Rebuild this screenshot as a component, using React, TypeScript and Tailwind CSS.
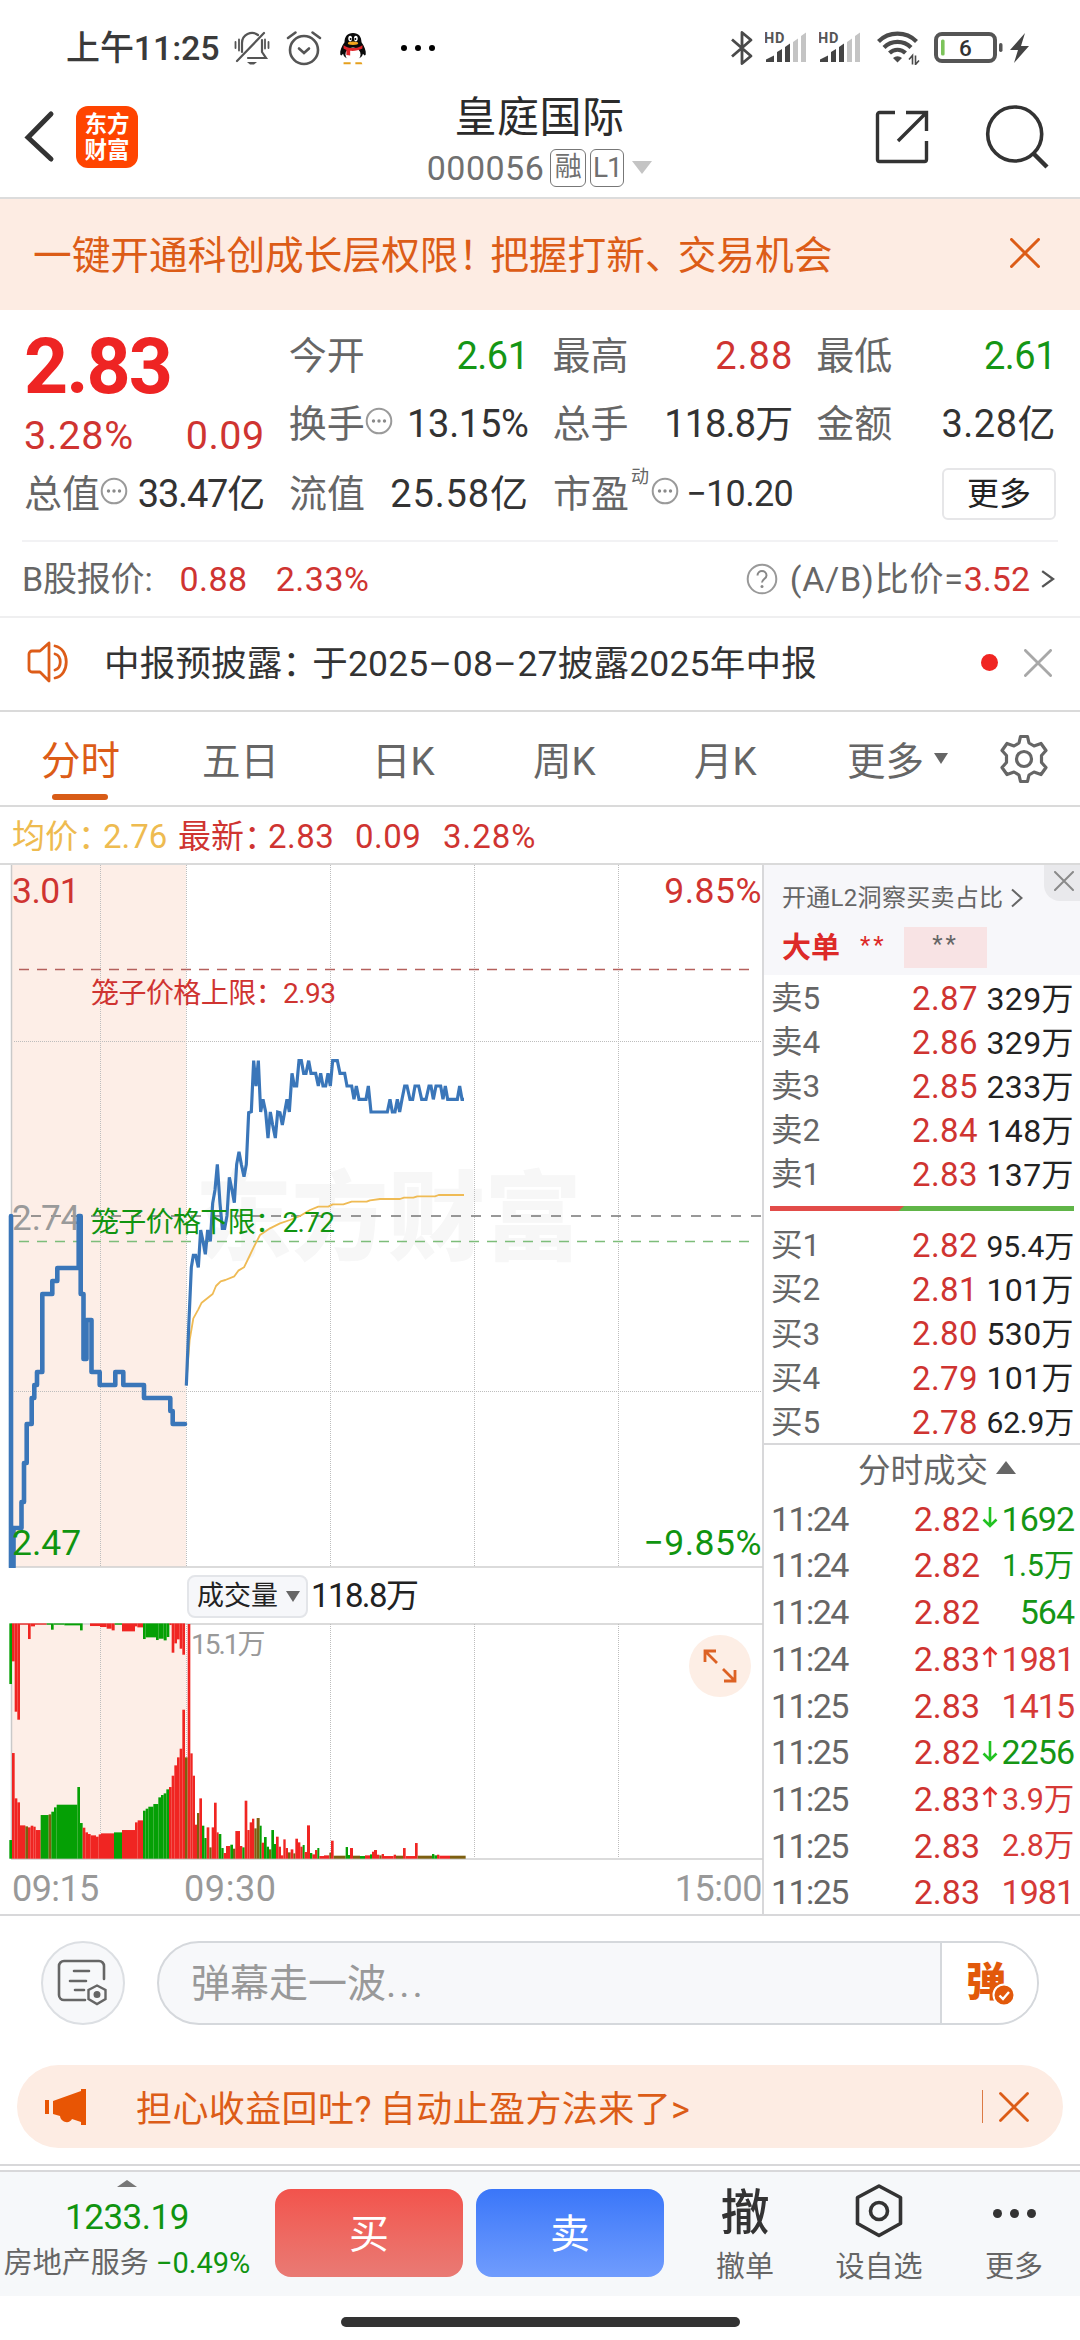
import React from "react";

const RED = "#f02522";
const GREEN = "#05a005";
const OLIVE = "#7d5f10";

/* ---------- icons ---------- */

function Close({ className, width = 3 }: { className: string; width?: number }) {
  return (
    <svg viewBox="0 0 30 30" className={className} fill="none" stroke="currentColor" strokeWidth={width}>
      <path d="M1.5 1.5 28.5 28.5M28.5 1.5 1.5 28.5" strokeLinecap="round" />
    </svg>
  );
}

function Dots() {
  return (
    <svg viewBox="0 0 28 28" className="-mt-1.5 size-7 shrink-0">
      <circle cx="14" cy="14" r="12.3" fill="none" stroke="#9a9a9a" strokeWidth="2" />
      <g fill="#8a8a8a">
        <circle cx="8.500" cy="14" r="1.7" />
        <circle cx="14" cy="14" r="1.7" />
        <circle cx="19.500" cy="14" r="1.7" />
      </g>
    </svg>
  );
}

function Signal() {
  return (
    <svg viewBox="0 0 42 34" className="h-[34px] w-[42px]">
      <text x="-1" y="11.5" fontSize="14.5" fontWeight="700" fontFamily="Roboto" fill="#555" letterSpacing="0.8">HD</text>
      <path d="M1 31v-2.5L9 24.5V31Z M12 31V21l5-3v13Z M20 31V16l5-3.500V31Z" fill="#444" />
      <path d="M28 31V11l5-3.500V31Z M36 31V5l5-3.500V31Z" fill="#c4c4c4" />
    </svg>
  );
}

function StatusBar() {
  return (
    <div className="flex h-24 items-center justify-between pl-[66px] pr-[50px] text-[#3a3a3a]">
      <div className="flex items-center">
        <span className="w-[156px] whitespace-nowrap text-[34px] font-medium tracking-[-0.100px]">上午11:25</span>
        <svg viewBox="0 0 36 36" className="ml-3 h-9 w-9" fill="none" stroke="#555" strokeWidth="2.200" strokeLinecap="round">
          <path d="M8 22V13a10 10 0 0 1 16-8M28 10v12l4 6H14" />
          <path d="M30 3 3 31" />
          <path d="M1.500 12v6M5 9.500v11M34.500 12v6M31 9.500v9" strokeWidth="1.800" />
          <path d="M13 32h10l-3 2.500h-4Z" fill="#555" stroke="none" />
        </svg>
        <svg viewBox="0 0 36 36" className="ml-4 h-9 w-9" fill="none" stroke="#555" strokeWidth="2.600" strokeLinecap="round">
          <circle cx="18" cy="20" r="14" />
          <path d="M2 8 9.500 2.500M34 8 26.500 2.500M13 18.500l5 4.500 5-4.500" />
        </svg>
        <svg viewBox="0 0 32 36" className="ml-[15px] h-[34px] w-8">
          <path d="M16 2c-6 0-9 4-9 10-3 4-5 9-4.500 13 1 2 2 0 3-1 1 8 20 8 21 0 1 1 2 3 3 1C30 21 28 16 25 12c0-6-3-10-9-10Z" fill="#0a0a0a" />
          <ellipse cx="16" cy="25" rx="8" ry="7.500" fill="#fff" />
          <ellipse cx="13" cy="8" rx="2" ry="3" fill="#fff" />
          <ellipse cx="19" cy="8" rx="2" ry="3" fill="#fff" />
          <circle cx="13.500" cy="8.500" r="1" fill="#000" />
          <circle cx="18.500" cy="8.500" r="1" fill="#000" />
          <ellipse cx="16" cy="13" rx="5.500" ry="1.800" fill="#f2a51c" />
          <path d="M6 15c6 4 14 4 20 0v3.500c-4 2-9 3-13 2.500v5l-4-.5v-5.500l-3-1.500Z" fill="#e0262b" />
          <path d="M6 33h7.500v2.200H6Zm12.500 0H25l1 2.200h-7.500Z" fill="#e5a01d" />
        </svg>
        <div className="ml-[32px] flex gap-2">
          <i className="size-1.5 rounded-full bg-black" />
          <i className="size-1.5 rounded-full bg-black" />
          <i className="size-1.5 rounded-full bg-black" />
        </div>
      </div>
      <div className="flex items-center">
        <svg viewBox="0 0 22 36" className="h-9 w-[22px]" fill="none" stroke="#4a4a4a" strokeWidth="2.800">
          <path d="M1 9.500 20 26 11 33.500V2.500L20 10 1 26.500" strokeLinejoin="round" />
        </svg>
        <div className="ml-3"><Signal /></div>
        <div className="ml-3"><Signal /></div>
        <svg viewBox="0 0 44 34" className="ml-4 h-[34px] w-11" fill="none" stroke="#4a4a4a" strokeWidth="4.200">
          <path d="M1.500 10.500a27 27 0 0 1 38 0M7 16.500a19 19 0 0 1 27 0M12.500 22a11.500 11.500 0 0 1 16 0" />
          <path d="M16 27a7 7 0 0 1 9 0l-4.500 4.500Z" fill="#4a4a4a" stroke="none" />
          <path d="M35.500 33.500v-9l-3.500 4M38.500 24.500v9l3.500-4" strokeWidth="1.600" />
        </svg>
        <svg viewBox="0 0 96 32" className="ml-[13px] h-8 w-24">
          <rect x="2" y="2" width="59" height="27" rx="6" fill="none" stroke="#555" strokeWidth="4" />
          <rect x="7" y="7.500" width="3.600" height="16" rx="1.500" fill="#7cc35a" />
          <text x="31.500" y="23.500" fontSize="22.500" textAnchor="middle" fill="#333" fontFamily="Roboto" fontWeight="500">6</text>
          <rect x="65" y="11" width="3.500" height="9" rx="1.700" fill="#555" />
          <path d="M91 1 76 18h8l-4 13 15-17h-8Z" fill="#444" />
        </svg>
      </div>
    </div>
  );
}

function Header() {
  return (
    <div className="flex h-[103px] items-center border-b-2 border-[#dcdcdc] pl-6">
      <svg viewBox="0 0 32 54" className="-mt-5 h-[54px] w-8 shrink-0" fill="none" stroke="#333" strokeWidth="5" strokeLinecap="round">
        <path d="M27 4 4 27.500 27 49" />
      </svg>
      <div className="-mt-5 ml-5 flex h-[62px] w-[62px] shrink-0 flex-col items-center justify-center rounded-xl bg-[#ff4400] text-[22.500px] font-bold leading-[26px] text-white">
        <span>东方</span>
        <span>财富</span>
      </div>
      <div className="flex w-[736px] shrink-0 flex-col items-center pl-[67px]">
        <div className="-mt-[15px] text-[42px] leading-[58px] tracking-[0.500px] text-[#2b2b2b]">皇庭国际</div>
        <div className="-mt-[1px] flex items-center text-[#707070]">
          <span className="text-[34px] leading-[44px] tracking-[0.500px]">000056</span>
          <span className="ml-1.5 flex h-[38px] w-9 items-center justify-center rounded-md border-[1.500px] border-[#777] text-[27px] leading-none">融</span>
          <span className="ml-1 flex h-[38px] w-[34px] items-center justify-center rounded-md border-[1.500px] border-[#777] text-[28px] leading-none tracking-[-1px]">L1</span>
          <span className="ml-2 h-0 w-0 border-x-[10px] border-t-[13px] border-x-transparent border-t-[#c4c4c4]" />
        </div>
      </div>
      <svg viewBox="0 0 56 56" className="-mt-5 h-14 w-14 shrink-0" fill="none" stroke="#333" strokeWidth="3.400">
        <path d="M21 3.500H5.500a2 2 0 0 0-2 2v45a2 2 0 0 0 2 2h45a2 2 0 0 0 2-2V32" />
        <path d="M32 3.500h20.500V22M52 4 24 32" />
      </svg>
      <svg viewBox="0 0 66 66" className="-mt-5 ml-[55px] h-[66px] w-[66px] shrink-0" fill="none" stroke="#333" strokeWidth="3.600">
        <circle cx="29.700" cy="30" r="27" />
        <path d="M48 49 62 63" strokeWidth="4.500" />
      </svg>
    </div>
  );
}

function Banner() {
  return (
    <div className="flex h-[111px] items-center justify-between bg-[#fdece3] pl-[33px] pr-10 text-[#dc5c17]">
      <div className="pt-1 text-[38.700px]">
        一键开通科创成长层权限<span className="mr-[-7px]">！</span>把握打新<span className="mr-[-6px]">、</span>交易机会
      </div>
      <Close className="-mt-1 size-[30px]" width={3} />
    </div>
  );
}

/* ---------- quote ---------- */

function Stat({ label, value, tone, info }: { label: string; value: string; tone: string; info?: boolean }) {
  return (
    <div className="flex h-[68px] items-center justify-between whitespace-nowrap">
      <div className="flex items-center text-[#666]">
        <span>{label}</span>
        {info && <Dots />}
      </div>
      <span className={tone}>{value}</span>
    </div>
  );
}

function Quote() {
  return (
    <div className="flex h-[230px] flex-col px-6 pt-3 text-[38px]">
      <div className="flex h-[138px]">
        <div className="w-[240px] text-[#cf3431]">
          <div className="h-[82px] text-[77px] font-bold leading-[91px] tracking-[-2px] text-[#ee2423]">2.83</div>
          <div className="mt-1 flex justify-between text-[39.500px] leading-[56px]">
            <span className="tracking-[0.800px]">3.28%</span>
            <span className="mr-[-1px] tracking-[0.500px]">0.09</span>
          </div>
        </div>
        <div className="ml-[25px] w-[240px]">
          <Stat label="今开" value="2.61" tone="text-[#159615] tracking-[-0.500px]" />
          <Stat label="换手" value="13.15%" tone="text-[#333] tracking-[-0.300px]" info />
        </div>
        <div className="ml-6 w-[240px]">
          <Stat label="最高" value="2.88" tone="text-[#cf3431] mr-[-1px] tracking-[1px]" />
          <Stat label="总手" value="118.8万" tone="text-[#333] tracking-[-0.900px]" />
        </div>
        <div className="ml-6 w-[240px]">
          <Stat label="最低" value="2.61" tone="text-[#159615] tracking-[-0.500px]" />
          <Stat label="金额" value="3.28亿" tone="text-[#333] tracking-[0.500px]" />
        </div>
      </div>
      <div className="flex h-[68px]">
        <div className="w-[240px]"><Stat label="总值" value="33.47亿" tone="text-[#333] tracking-[-1.200px]" info /></div>
        <div className="ml-[25px] w-[240px]"><Stat label="流值" value="25.58亿" tone="text-[#333] tracking-[0.900px]" /></div>
        <div className="ml-6 flex w-[240px] items-center text-[#666]">
          <span>市盈</span>
          <sup className="-mt-4 ml-0.5 text-lg leading-none">动</sup>
          <span className="ml-0.5 flex"><Dots /></span>
          <span className="ml-auto whitespace-nowrap text-[36px] tracking-[-0.700px] text-[#333]">−10.20</span>
        </div>
        <div className="ml-auto mt-2 flex h-[52px] w-[114px] items-center justify-center rounded-md border-2 border-[#e6e6e8] text-[32px] text-[#222]">更多</div>
      </div>
    </div>
  );
}

function BShare() {
  return (
    <div className="mx-[22px] flex h-[76px] items-center border-t-2 border-[#f2f2f4] text-[34px] text-[#666]">
      <span className="tracking-[-0.200px]">B股报价:</span>
      <span className="ml-[27px] tracking-[0.500px] text-[#cf3431]">0.88</span>
      <span className="ml-[28px] tracking-[0.500px] text-[#cf3431]">2.33%</span>
      <svg viewBox="0 0 32 32" className="ml-auto size-8">
        <circle cx="16" cy="16" r="14.300" fill="none" stroke="#999" strokeWidth="2" />
        <path d="M11.500 12.500c0-6 9-6 9 0 0 3.500-4.500 3.500-4.500 7" fill="none" stroke="#888" strokeWidth="2" />
        <circle cx="16" cy="23.500" r="1.500" fill="#888" />
      </svg>
      <span className="ml-3 tracking-[0.800px]">(A/B)比价=</span>
      <span className="text-[#cf3431]">3.52</span>
      <svg viewBox="0 0 16 24" className="ml-2.5 mr-0.5 h-5 w-4" fill="none" stroke="#555" strokeWidth="2.800"><path d="M1 2.500 14 12 1 21.500" /></svg>
    </div>
  );
}

function Notice() {
  return (
    <div className="flex h-[96px] items-center border-y-2 border-t-[#efeff0] border-b-[#dadada] pl-[27px] pr-[28px]">
      <svg viewBox="0 0 48 42" className="-mt-1 h-[42px] w-12" fill="none" stroke="#dd5c18" strokeWidth="2.800" strokeLinejoin="round" strokeLinecap="round">
        <path d="M22 2 13 10H5a3 3 0 0 0-3 3v15a3 3 0 0 0 3 3h8l9 9ZM28 5c15 3 15 29 0 32M28 13c7 2 7 14 0 16" />
      </svg>
      <span className="ml-[29px] whitespace-nowrap pt-0.5 text-[35.500px] tracking-[0.200px] text-[#333]">
        中报预披露<span className="mr-[-6px]">：</span>于2025<span className="tracking-[1px]">–</span>08<span className="tracking-[1px]">–</span>27披露2025年中报
      </span>
      <i className="-mt-1 ml-auto mr-[26px] size-[17px] rounded-full bg-[#f02522]" />
      <Close className="-mt-0.5 size-[28px] text-[#a8a8a8]" width={3} />
    </div>
  );
}

function Tabs() {
  return (
    <div className="flex h-[95px] items-center border-b-2 border-[#dadada] pl-[41px] text-[38.500px] text-[#666]">
      <div className="relative w-[161px] pt-1.5 text-[39.500px] text-[#dc5c17]">
        分时
        <i className="absolute -bottom-[9px] left-[11px] h-1.5 w-14 rounded-full bg-[#d85c17]" />
      </div>
      <div className="w-[170px] pt-1.5">五日</div>
      <div className="w-[161px] pt-1.5">日K</div>
      <div className="w-[161px] pt-1.5">周K</div>
      <div className="w-[153px] pt-1.5">月K</div>
      <div className="flex w-[152px] items-center pt-1.5">
        更多
        <i className="-mt-1.5 ml-2.5 border-x-[7px] border-t-[11px] border-x-transparent border-t-[#666]" />
      </div>
      <svg viewBox="0 0 50 50" className="h-[50px] w-[50px]" fill="none" stroke="#666" strokeWidth="3.200" strokeLinejoin="round">
        <path d="M21.500 2.500h7l1.500 6.500 5 3 7-2.500 5 7-4.500 5v7l4.500 5-5 7-7-2.500-5 3-1.500 6.500h-7L20 41l-5-3-7 2.500-5-7 4.500-5v-7l-4.500-5 5-7 7 2.500 5-3Z" />
        <circle cx="25" cy="25" r="7.500" />
      </svg>
    </div>
  );
}

function Legend() {
  return (
    <div className="flex h-[58px] items-center whitespace-pre border-b-2 border-[#dadada] pl-3 pt-1 text-[33px] text-[#cf3431]">
      <span className="w-[91px] text-[#eebb50]">均价：</span>
      <span className="w-[75px] text-[#eebb50]">2.76</span>
      <span className="w-[90px]">最新：</span>
      <span className="w-[87px] tracking-[0.500px]">2.83</span>
      <span className="w-[88px] tracking-[0.500px]">0.09</span>
      <span className="tracking-[1px]">3.28%</span>
    </div>
  );
}

/* ---------- price chart: 763 x 703, one cent is 13px ---------- */

const priceY = (p: number) => (3.01 - p) * 1300;

const AUCTION: [number, number][] = [
  [11, 2.47], [13.500, 2.5], [21.500, 2.52], [24, 2.55], [26.700, 2.58], [31.700, 2.6], [34.300, 2.61], [37, 2.62],
  [42.300, 2.68], [52.300, 2.69], [57.300, 2.7], [78.700, 2.74], [80.700, 2.68], [83.500, 2.63], [86.500, 2.66],
  [91.500, 2.62], [99.700, 2.61], [115.300, 2.62], [123.300, 2.61], [144, 2.6], [170.300, 2.59], [172.700, 2.58],
];
const auctionPath =
  `M11 ${priceY(2.74)}` + AUCTION.map(([x, p]) => `H${x}V${priceY(p)}`).join("") + "H185";

// Values in thirds of a pixel, measured from (180, 155) of the chart.
const PRICE =
  "19,1097 27,900 34,742 40,706 47,706 55,742 62,630 69,664 76,703 83,630 91,664 98,550 105,510 112,433 120,550 127,625 134,625 141,587 148,472 156,510 163,548 170,433 177,395 184,433 192,470 199,433 206,278 214,275 221,122 228,198 235,122 242,276 249,238 257,276 264,354 271,276 278,315 286,354 293,276 300,278 307,315 314,276 321,238 328,276 336,160 343,198 350,198 357,122 364,122 371,160 378,160 386,122 393,160 407,160 415,198 422,160 429,198 437,198 444,160 451,198 458,122 472,122 480,160 494,160 501,198 515,198 522,238 529,198 537,238 558,238 565,198 573,276 622,276 630,238 637,276 645,276 652,238 659,276 666,238 674,198 681,198 690,238 698,238 705,198 716,198 725,238 738,238 747,198 753,198 760,238 768,198 782,198 789,238 796,198 803,238 832,238 839,198 846,238 852,238";
const AVERAGE =
  "19,1090 29,960 40,895 55,868 65,848 98,822 108,798 122,784 136,780 163,769 175,752 192,742 210,705 222,680 240,645 270,625 300,610 330,600 360,588 390,570 415,560 445,560 458,553 490,553 515,545 560,545 570,541 600,537 660,537 672,533 700,533 712,529 765,529 776,525 852,525";

const GRID_X = [100.500, 186.500, 330.500, 474.500, 618.500];

function PriceChart() {
  return (
    <svg viewBox="0 0 763 703" className="block h-[703px] w-[763px]" fontFamily="Roboto, 'Noto Sans CJK SC', sans-serif">
      <rect x="12" y="0" width="174" height="702" fill="#fdeee7" />
      <text x="195" y="387" fontSize="97" fontWeight="900" fill="#f7f7f7" letterSpacing="-0.500">东方财富</text>
      <path d="M11.500 0V702" stroke="#c9c9c9" strokeWidth="1.500" />
      <path d="M11 702H763" stroke="#cfcfcf" strokeWidth="1.500" />
      <g stroke="#bdbdbd" strokeWidth="1" strokeDasharray="1 1">
        {GRID_X.map((x) => <path key={x} d={`M${x} 0V702`} />)}
        <path d="M14 176.500H762M14 526.500H762" />
      </g>
      <path d="M19 104.500H750" stroke="#b5605c" strokeWidth="1.400" strokeDasharray="10 8" />
      <path d="M19 376.500H750" stroke="#7dbd7a" strokeWidth="1.400" strokeDasharray="10 8" />
      <path d="M11 351H762" stroke="#777" strokeWidth="1.600" strokeDasharray="10 10" />
      <text x="12" y="365" fontSize="35" fill="#9a9a9a" letterSpacing="0">2.74</text>
      <g fill="none" strokeLinejoin="round">
        <g transform="translate(180 155) scale(0.33333)">
          <polyline points={AVERAGE} stroke="#efbb55" strokeWidth="5.500" />
          <polyline points={PRICE} stroke="#3a76b9" strokeWidth="9.500" strokeLinejoin="miter" />
        </g>
        <path d={auctionPath} stroke="#3a76b9" strokeWidth="4.600" strokeLinecap="round" />
      </g>
      <g fontSize="28" fill="#cf3431">
        <text x="91" y="137.500" textLength="245">笼子价格上限：2.93</text>
        <text x="91" y="366.500" fill="#109410" textLength="244">笼子价格下限：2.72</text>
      </g>
      <g fontSize="35.500" fill="#cf3431">
        <text x="12" y="38" letterSpacing="-0.500">3.01</text>
        <text x="762" y="38" textAnchor="end" letterSpacing="0.500">9.85%</text>
        <text x="12" y="690" fill="#109410">2.47</text>
        <text x="762" y="690" fill="#109410" textAnchor="end" letterSpacing="0.500">−9.85%</text>
      </g>
    </svg>
  );
}

/* ---------- volume: x start, x end, height, colour, in thirds of a pixel ---------- */

type Bar = [number, number, number, string];
const R = RED, G = GREEN, O = OLIVE;

const VOLUME: Bar[] = [
  [28, 36, 838, G], [36, 44, 577, R], [44, 52, 713, R], [52, 60, 725, R], [60, 76, 794, R], [76, 84, 797, O], [84, 92, 800, R],
  [92, 100, 795, R], [100, 107, 798, R], [107, 122, 808, R], [122, 146, 763, G], [146, 154, 761, O], [154, 162, 753, G],
  [162, 170, 740, G], [170, 232, 732, G], [232, 240, 679, G], [240, 248, 787, G], [248, 256, 801, R], [256, 264, 815, R],
  [264, 272, 820, R], [272, 288, 824, R], [288, 296, 828, R], [296, 303, 821, R], [303, 342, 818, R], [342, 366, 815, G],
  [366, 405, 808, R], [405, 413, 785, R], [413, 429, 779, R], [429, 437, 750, G], [437, 445, 744, G], [445, 460, 738, G],
  [460, 475, 730, G], [475, 483, 710, G], [483, 491, 703, G], [491, 499, 698, G], [499, 507, 686, G], [507, 515, 679, R],
  [515, 523, 645, R], [523, 531, 614, R], [531, 539, 590, R], [539, 547, 564, R], [547, 555, 447, R], [555, 563, 590, O],
  [563, 571, 190, R], [571, 578, 578, R], [578, 585, 645, R], [585, 591, 792, R], [591, 598, 757, O], [598, 606, 713, R],
  [606, 613, 795, G], [613, 620, 832, G], [620, 628, 800, R], [628, 635, 860, O], [635, 642, 800, R], [642, 650, 726, R],
  [650, 656, 815, R], [656, 664, 820, G], [664, 671, 862, G], [671, 678, 877, R], [678, 691, 856, R], [691, 699, 852, G],
  [699, 706, 864, O], [706, 720, 811, R], [720, 727, 856, R], [727, 734, 860, G], [734, 742, 720, R], [742, 749, 808, R],
  [749, 756, 785, R], [756, 763, 774, R], [763, 770, 803, O], [770, 779, 772, O], [779, 785, 795, G], [785, 792, 846, R],
  [792, 800, 829, G], [800, 807, 858, G], [807, 814, 866, O], [814, 822, 808, G], [822, 828, 850, G], [828, 836, 828, R],
  [836, 843, 858, R], [843, 850, 884, R], [850, 857, 836, R], [857, 864, 862, R], [864, 872, 875, O], [872, 880, 866, R],
  [880, 886, 878, O], [886, 894, 834, R], [894, 901, 845, R], [901, 908, 858, R], [908, 914, 853, G], [914, 921, 874, R],
  [921, 930, 794, R], [930, 937, 877, G], [937, 945, 881, R], [945, 952, 868, R], [952, 958, 862, G], [958, 972, 886, R],
  [972, 988, 884, R], [988, 993, 876, O], [993, 1001, 840, R], [1001, 1037, 885, O], [1037, 1044, 859, G], [1044, 1050, 883, G],
  [1050, 1059, 862, R], [1059, 1080, 885, O], [1080, 1095, 886, G], [1095, 1110, 884, R], [1110, 1116, 881, G],
  [1116, 1122, 873, R], [1122, 1131, 868, R], [1131, 1138, 882, R], [1138, 1145, 884, O], [1145, 1152, 880, R],
  [1152, 1181, 886, R], [1181, 1188, 882, R], [1188, 1209, 885, O], [1209, 1217, 862, R], [1217, 1245, 886, R],
  [1245, 1253, 847, R], [1253, 1296, 885, O], [1296, 1303, 880, G], [1303, 1311, 884, G], [1311, 1318, 882, R], [1318, 1350, 885, R],
  [1350, 1397, 885, O],
];

const UNMATCHED: Bar[] = [
  [28, 36, 370, G], [36, 44, 302, R], [44, 52, 453, R], [52, 60, 477, R], [60, 84, 192, R], [84, 92, 235, R], [92, 105, 197, R],
  [105, 140, 192, R], [140, 153, 192, G], [153, 161, 207, G], [161, 193, 192, G], [193, 240, 194, G], [240, 248, 209, G],
  [270, 300, 196, R], [300, 320, 199, R], [320, 335, 204, R], [335, 344, 209, R], [344, 366, 192, G], [366, 405, 212, R],
  [405, 412, 197, R], [412, 429, 200, R], [429, 437, 235, G], [437, 468, 230, G], [468, 476, 238, G], [476, 491, 234, G],
  [491, 500, 239, G], [500, 508, 229, G], [508, 515, 193, R], [515, 523, 276, R], [523, 531, 248, R], [531, 539, 236, R],
  [539, 547, 264, R], [547, 555, 282, R],
];

function VolumeChart() {
  return (
    <svg viewBox="0 0 763 237" className="block h-[237px] w-[763px]" fontFamily="Roboto, 'Noto Sans CJK SC', sans-serif">
      <rect x="12" y="1" width="174" height="234" fill="#fdeee7" />
      <path d="M11.500 1V235" stroke="#c9c9c9" strokeWidth="1.500" />
      <path d="M11 1H763M11 236H763" stroke="#cfcfcf" strokeWidth="1.500" />
      <g stroke="#bdbdbd" strokeWidth="1" strokeDasharray="1 1">
        {GRID_X.map((x) => <path key={x} d={`M${x} 1V235`} />)}
      </g>
      <g transform="translate(0 -62.300) scale(0.33333)">
        {VOLUME.map(([a, b, y, c]) => <rect key={a} x={a} y={y} width={b - a} height={894 - y} fill={c} />)}
        {UNMATCHED.map(([a, b, y, c]) => <rect key={a} x={a} y={188} width={b - a} height={y - 188} fill={c} />)}
      </g>
      <text x="191" y="30.500" fontSize="28" fill="#999" letterSpacing="-2">15.1万</text>
    </svg>
  );
}

function ChartColumn() {
  return (
    <div className="relative h-[1049px] w-[764px] border-r-2 border-[#d8d8da]">
      <PriceChart />
      <div className="flex h-[55px] items-center pl-[187px] text-[#222]">
        <div className="mt-0.5 flex h-[43px] w-[121px] items-center rounded-lg border-2 border-[#e3e5e9] bg-[#f6f7fa] pl-2 text-[27px]">
          成交量
          <i className="ml-2 border-x-[7px] border-t-[11px] border-x-transparent border-t-[#666]" />
        </div>
        <span className="ml-[3px] text-[33px] tracking-[-1.600px]">118.8万</span>
      </div>
      <VolumeChart />
      <div className="flex h-[54px] items-center pl-3 pt-1 text-[36px] text-[#999]">
        <span className="w-[172px] tracking-[-0.600px]">09:15</span>
        <span className="tracking-[0.600px]">09:30</span>
        <span className="ml-auto tracking-[-0.500px]">15:00</span>
      </div>
      <div className="absolute left-[689px] top-[770px] flex size-[62px] items-center justify-center rounded-full bg-[#fdeee5]">
        <svg viewBox="0 0 34 34" className="size-[34px]" fill="none" stroke="#dd6224" strokeWidth="2.800">
          <path d="M2 13V2h11M2.500 2.500 14 14M32 21v11H21M31.500 31.500 20 20" />
        </svg>
      </div>
    </div>
  );
}

/* ---------- order book ---------- */

const ASKS = [["卖5", "2.87", "329万"], ["卖4", "2.86", "329万"], ["卖3", "2.85", "233万"], ["卖2", "2.84", "148万"], ["卖1", "2.83", "137万"]];
const BIDS = [["买1", "2.82", "95.4万"], ["买2", "2.81", "101万"], ["买3", "2.80", "530万"], ["买4", "2.79", "101万"], ["买5", "2.78", "62.9万"]];

const TRADES: [string, string, string, "up" | "down" | "", "r" | "g"][] = [
  ["11:24", "2.82", "1692", "down", "g"],
  ["11:24", "2.82", "1.5万", "", "g"],
  ["11:24", "2.82", "564", "", "g"],
  ["11:24", "2.83", "1981", "up", "r"],
  ["11:25", "2.83", "1415", "", "r"],
  ["11:25", "2.82", "2256", "down", "g"],
  ["11:25", "2.83", "3.9万", "up", "r"],
  ["11:25", "2.83", "2.8万", "", "r"],
  ["11:25", "2.83", "1981", "", "r"],
];

function BookRows({ rows }: { rows: string[][] }) {
  return (
    <div>
      {rows.map(([label, price, size]) => (
        <div key={label} className="flex h-[44.100px] items-center whitespace-nowrap pl-[7px] pr-1.5 pt-[3px] text-[33px]">
          <span className="w-[80px] text-[31.500px] text-[#666]">{label}</span>
          <span className="w-[127px] text-right tracking-[0.400px] text-[#cf3431]">{price}</span>
          <span className={size.includes(".") ? "ml-auto text-[30px] tracking-[-0.200px] text-[#222]" : "ml-auto text-[32px] tracking-[0.400px] text-[#222]"}>{size}</span>
        </div>
      ))}
    </div>
  );
}

function Arrow({ dir }: { dir: "up" | "down" }) {
  return dir === "up" ? (
    <svg viewBox="0 0 16 22" className="-mt-1 h-[22px] w-4" fill="none" stroke="#e03030" strokeWidth="2.600"><path d="M8 21V2M1.500 8.500 8 2l6.500 6.500" /></svg>
  ) : (
    <svg viewBox="0 0 16 22" className="-mt-1 h-[22px] w-4" fill="none" stroke="#22c322" strokeWidth="2.600"><path d="M8 1v19M1.500 13.500 8 20l6.500-6.500" /></svg>
  );
}

function BookColumn() {
  return (
    <div className="relative h-[1049px] flex-1">
      <div className="h-[110px] bg-[#f7f7fa] pl-[18px] pt-[14px]">
        <div className="flex items-center text-[24px] leading-[38px] text-[#666]">
          <span className="tracking-[0.300px]">开通L2洞察买卖占比</span>
          <svg viewBox="0 0 12 20" className="ml-2 h-5 w-3" fill="none" stroke="#666" strokeWidth="2"><path d="M1 1.500 10.500 10 1 18.500" /></svg>
        </div>
        <div className="mt-2 flex h-[44px] items-center text-[29px] font-bold text-[#dd2a28]">
          <span className="pt-[3px]">大单</span>
          <span className="ml-5 w-[44px] pb-1 text-[24px] font-normal tracking-[3px]">**</span>
          <span className="flex h-[41px] w-[83px] items-center justify-center bg-[#f8e3e4] pb-1.5 text-[24px] font-normal tracking-[3px] text-[#666]">**</span>
        </div>
      </div>
      <div className="absolute right-0 top-0 flex h-[36px] w-9 items-center justify-center rounded-bl-2xl bg-[#e9e9ec] pb-1 pl-1">
        <Close className="size-[20px] text-[#8a8a8a]" width={3} />
      </div>
      <BookRows rows={ASKS} />
      <div className="mx-1.5 mt-[10.500px] flex h-[5.500px] bg-[#60b548]">
        <i className="h-full w-[134px] bg-[#e24c49] [clip-path:polygon(0_0,100%_0,calc(100%-6px)_100%,0_100%)]" />
      </div>
      <div className="mt-[11px]"><BookRows rows={BIDS} /></div>
      <div className="flex h-[51px] items-center justify-center border-t-2 border-[#d8d8da] pl-[30px] pt-1 text-[32.500px] text-[#666]">
        分时成交
        <i className="mb-2 ml-2 border-x-[10px] border-b-[13px] border-x-transparent border-b-[#666]" />
      </div>
      {TRADES.map(([time, price, size, dir, tone], i) => (
        <div key={i} className="flex h-[46.700px] items-center whitespace-nowrap pl-[7px] pr-1.5 pt-1 text-[34px]">
          <span className="w-[86px] tracking-[-1.600px] text-[#666]">{time}</span>
          <span className="w-[123px] text-right text-[#cf3431]">{price}</span>
          <span className="ml-0.5 flex w-4">{dir && <Arrow dir={dir} />}</span>
          <span className={(tone === "g" ? "text-[#159615]" : "text-[#d63a37]") + (size.includes("万") ? " ml-auto text-[30.500px] tracking-[-0.200px]" : " ml-auto tracking-[-1px]")}>{size}</span>
        </div>
      ))}
    </div>
  );
}

/* ---------- footer ---------- */

function CommentBar() {
  return (
    <div className="relative flex h-[151px] border-t-2 border-[#d8d8da] bg-white pl-[41px] pt-[25px]">
      <div className="flex size-[84px] items-center justify-center rounded-full border-2 border-[#dcdfe3] bg-[#f7f8fa]">
        <svg viewBox="0 0 52 48" className="h-12 w-[52px]" fill="none" stroke="#666" strokeWidth="2.600" strokeLinecap="round">
          <path d="M47 20V7a5 5 0 0 0-5-5H7a5 5 0 0 0-5 5v29a5 5 0 0 0 5 5h21M17 12h15M13 22h16M18 31h9" />
          <path d="M40 26.500 48.500 31v9L40 45l-8.500-5v-9Z" strokeWidth="2.400" />
          <circle cx="40" cy="35.500" r="2.200" fill="#666" />
        </svg>
      </div>
      <div className="ml-8 flex h-[84px] w-[882px] overflow-hidden rounded-full border-2 border-[#d5d8dc] bg-[#f7f8fa]">
        <div className="flex-1 pl-[32px] text-[39px] leading-[83px] text-[#999]">弹幕走一波<span className="tracking-[3px]">...</span></div>
        <div className="flex w-[97px] items-center border-l-2 border-[#d5d8dc] bg-white pl-[24px]">
          <div className="relative text-[40px] font-black leading-none text-[#e2590b]">
            弹
            <svg viewBox="0 0 24 24" className="absolute -bottom-1 -right-2.5 size-6">
              <circle cx="12" cy="12" r="10.500" fill="#e2590b" stroke="#fff" strokeWidth="2" />
              <path d="M7.500 12.500 11 16l6-7" fill="none" stroke="#fff" strokeWidth="2.400" />
            </svg>
          </div>
        </div>
      </div>
    </div>
  );
}

function Tip() {
  return (
    <div className="mx-[17px] flex h-[83px] items-center rounded-full bg-[#fdece3] pl-7 pr-[34px] text-[#dc5c17]">
      <svg viewBox="0 0 42 36" className="h-9 w-[42px]" fill="#e85504">
        <path d="M0 11h4v14H0ZM8 12 36 2V0h5v36h-5v-3l-9-3c-2 5-11 4-12-3l-7-2Z" />
      </svg>
      <span className="ml-[49px] whitespace-nowrap pt-1.5 text-[36px] tracking-[0.400px]">担心收益回吐<span className="mr-2">?</span>自动止盈方法来了&gt;</span>
      <i className="ml-auto mr-[16px] h-[33px] w-[1.500px] bg-[#dc7a45]" />
      <Close className="size-[30px]" width={2.800} />
    </div>
  );
}

function BottomBar() {
  return (
    <div className="mt-1 flex h-[126px] border-t-2 border-[#d8d8da] bg-[#f6f8fa]">
      <div className="flex w-[262px] flex-col items-center pr-2 pt-[8px]">
        <i className="border-x-[10px] border-b-[7px] border-x-transparent border-b-[#777]" />
        <span className="mt-[9px] text-[35px] leading-[44px] tracking-[-0.500px] text-[#109410]">1233.19</span>
        <span className="mt-[3px] whitespace-nowrap text-[29px] leading-10 text-[#666]">
          房地产服务 <span className="text-[#109410]">−0.49%</span>
        </span>
      </div>
      <div className="ml-[13px] mt-[17px] flex h-[88px] w-[188px] items-center justify-center rounded-2xl bg-linear-to-b from-[#f2534c] to-[#e97a74] pt-1 text-[40px] text-white">买</div>
      <div className="ml-[13px] mt-[17px] flex h-[88px] w-[188px] items-center justify-center rounded-2xl bg-linear-to-b from-[#3a76f9] to-[#709cfd] pt-1 text-[40px] text-white">卖</div>
      <div className="flex w-[162px] flex-col items-center text-[#666]">
        <span className="h-[73px] text-[49px] font-medium leading-[84px] text-[#333]">撤</span>
        <span className="text-[29px] leading-[44px]">撤单</span>
      </div>
      <div className="flex w-[106px] flex-col items-center text-[#666]">
        <span className="flex h-[73px] items-center pt-1">
          <svg viewBox="0 0 48 54" className="h-[54px] w-12" fill="none" stroke="#333" strokeWidth="3.600" strokeLinejoin="round">
            <path d="M24 2 45.500 13.500v26L24 51.500 2.500 39.500v-26Z" />
            <circle cx="24" cy="27" r="8.500" />
          </svg>
        </span>
        <span className="text-[29px] leading-[44px]">设自选</span>
      </div>
      <div className="ml-[24px] flex w-[116px] flex-col items-center text-[#666]">
        <span className="flex h-[73px] items-center gap-2 pt-2.5">
          <i className="size-[9px] rounded-full bg-[#333]" />
          <i className="size-[9px] rounded-full bg-[#333]" />
          <i className="size-[9px] rounded-full bg-[#333]" />
        </span>
        <span className="text-[29px] leading-[44px]">更多</span>
      </div>
    </div>
  );
}

export default function App() {
  return (
    <div className="flex h-[2340px] w-[1080px] flex-col overflow-hidden bg-white font-['Roboto','Noto_Sans_CJK_SC',sans-serif] leading-normal">
      <StatusBar />
      <Header />
      <Banner />
      <Quote />
      <BShare />
      <Notice />
      <Tabs />
      <Legend />
      <div className="flex h-[1049px]">
        <ChartColumn />
        <BookColumn />
      </div>
      <CommentBar />
      <Tip />
      <div className="h-[18px] border-b-2 border-[#d8d8da]" />
      <BottomBar />
      <div className="flex justify-center pt-[21px]">
        <div className="h-2.5 w-[399px] rounded-full bg-[#333]" />
      </div>
    </div>
  );
}
